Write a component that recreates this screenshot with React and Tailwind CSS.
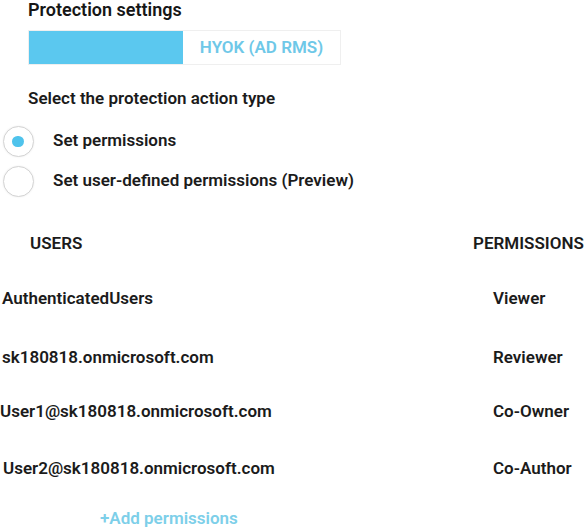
import React, { useState } from 'react';

const users = [
  { name: 'AuthenticatedUsers', perm: 'Viewer', pl: 'pl-[2px]', gap: 'mt-[35px]' },
  { name: 'sk180818.onmicrosoft.com', perm: 'Reviewer', pl: 'pl-[2px]', gap: 'mt-[39px]' },
  { name: 'User1@sk180818.onmicrosoft.com', perm: 'Co-Owner', pl: 'pl-0', gap: 'mt-[34px]' },
  { name: 'User2@sk180818.onmicrosoft.com', perm: 'Co-Author', pl: 'pl-[3px]', gap: 'mt-[37px]' },
];

const Radio = ({ checked, label, onClick }) => (
  <div className="flex items-center h-[40px] cursor-pointer" onClick={onClick}>
    <div className="w-[36px] flex justify-center">
      <span className="w-[31px] h-[31px] rounded-full border border-[#d4d4d4] bg-white shadow-[0_0_2px_rgba(0,0,0,0.08)] flex items-center justify-center">
        {checked && <span className="w-[12px] h-[11px] rounded-full bg-[#4fc3ec]" />}
      </span>
    </div>
    <span className="ml-[17px] text-[17px] font-semibold text-[#1b1b1b]">{label}</span>
  </div>
);

export default function App() {
  const [mode, setMode] = useState('set');

  return (
    <div className="w-[584px] h-[530px] bg-white overflow-hidden" style={{ fontFamily: 'Roboto, "Liberation Sans", sans-serif' }}>
      <div className="pl-[28px]">
        <h2 className="h-[20px] leading-[20px] text-[18px] font-semibold text-[#161616]">Protection settings</h2>
        <div className="mt-[10px] flex h-[35px] w-[313px] border border-[#efefef]">
          <div className="w-[154px] bg-[#5bc8ef]" />
          <div className="flex-1 flex items-center justify-center text-[17px] font-semibold text-[#6fc8e8]">HYOK (AD RMS)</div>
        </div>
        <p className="mt-[23px] h-[20px] leading-[20px] text-[17px] font-semibold text-[#1b1b1b]">Select the protection action type</p>
      </div>

      <div className="mt-[13px]">
        <Radio checked={mode === 'set'} label="Set permissions" onClick={() => setMode('set')} />
        <Radio checked={mode === 'user'} label="Set user-defined permissions (Preview)" onClick={() => setMode('user')} />
      </div>

      <div className="mt-[30px] grid grid-cols-[473px_1fr] h-[20px] items-center text-[17px] font-semibold text-[#1b1b1b] whitespace-nowrap">
        <span className="pl-[30px]">USERS</span>
        <span>PERMISSIONS</span>
      </div>

      {users.map(u => (
        <div key={u.name} className={`${u.gap} grid grid-cols-[493px_1fr] h-[20px] items-center text-[17px] font-semibold text-[#1b1b1b] whitespace-nowrap`}>
          <span className={u.pl}>{u.name}</span>
          <span>{u.perm}</span>
        </div>
      ))}

      <div className="mt-[33px] h-[20px] flex items-center pl-[100px] text-[17px] font-semibold text-[#7dcfe9]">+Add permissions</div>
    </div>
  );
}
